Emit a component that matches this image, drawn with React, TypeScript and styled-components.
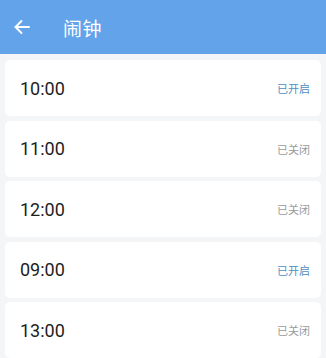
import React from "react";
import styled, { createGlobalStyle } from "styled-components";

const Global = createGlobalStyle`
  html, body { margin: 0; padding: 0; background: #f3f5f7; }
  body { font-family: Roboto, "Noto Sans CJK SC", sans-serif; }
`;

const Page = styled.div`
  width: 326px;
  height: 358px;
  overflow: hidden;
  background: #f3f5f7;
`;

const Header = styled.div`
  height: 54px;
  background: #62a3ea;
  display: flex;
  align-items: center;
  padding-left: 13px;
  gap: 32px;
  box-sizing: border-box;
`;

const BackIcon = styled.svg`
  width: 18px;
  height: 18px;
  flex: none;
`;

const Title = styled.div`
  color: #fff;
  font-size: 19px;
  font-family: "Noto Sans CJK SC", sans-serif;
  letter-spacing: 0.5px;
  margin-top: 1px;
`;

const List = styled.div`
  display: flex;
  flex-direction: column;
  gap: 4.5px;
  padding: 6px 5px 0 5px;
`;

const Card = styled.div`
  height: 56px;
  flex: none;
  background: #fff;
  border-radius: 5px;
  display: flex;
  align-items: center;
  justify-content: space-between;
  padding: 0 11px 0 15px;
  box-sizing: border-box;
`;

const Time = styled.div`
  font-size: 18px;
  color: #1e1e1e;
  font-family: Roboto, sans-serif;
`;

const Status = styled.div<{ $on: boolean }>`
  font-size: 11px;
  font-family: "Noto Sans CJK SC", sans-serif;
  color: ${(p) => (p.$on ? "#4f8fbf" : "#9a9a9a")};
`;

const alarms = [
  { t: "10:00", on: true },
  { t: "11:00", on: false },
  { t: "12:00", on: false },
  { t: "09:00", on: true },
  { t: "13:00", on: false },
];

export default function App() {
  return (
    <Page>
      <Global />
      <Header>
        <BackIcon viewBox="0 0 18 18" fill="none" stroke="#fff" strokeWidth="1.9" strokeLinecap="round" strokeLinejoin="round">
          <path d="M16 9H2.5" />
          <path d="M8.5 3L2.5 9l6 6" />
        </BackIcon>
        <Title>闹钟</Title>
      </Header>
      <List>
        {alarms.map((a, i) => (
          <Card key={i}>
            <Time>{a.t}</Time>
            <Status $on={a.on}>{a.on ? "已开启" : "已关闭"}</Status>
          </Card>
        ))}
      </List>
    </Page>
  );
}
